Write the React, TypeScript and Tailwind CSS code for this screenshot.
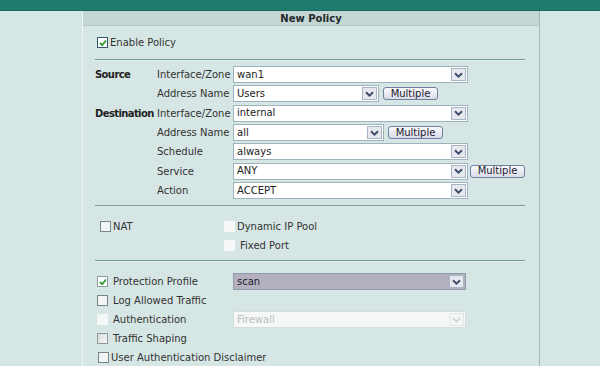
import React from "react";

const font = { fontFamily: '"DejaVu Sans", Verdana, sans-serif' };

function Chevron({ color = "#4a5a7a" }: { color?: string }) {
  return (
    <svg width="9" height="6" viewBox="0 0 9 6">
      <path d="M1 1.2 L4.5 4.6 L8 1.2" fill="none" stroke={color} strokeWidth="1.9" />
    </svg>
  );
}

function Select({
  value,
  width,
  variant = "normal",
}: {
  value: string;
  width: string;
  variant?: "normal" | "selected" | "disabled";
}) {
  const box =
    variant === "selected"
      ? "bg-[#b4b0bf] border-[#8d9aa8] text-[#1e1e2a]"
      : variant === "disabled"
      ? "bg-[#f6f8f7] border-[#d6dedd] text-[#b9bebe]"
      : "bg-white border-[#9fb3bd] text-[#222]";
  const arrow =
    variant === "disabled"
      ? "bg-[#f4f5f5] border-[#e2e6e6]"
      : "bg-[#e6e8ee] border-[#a9b4c4]";
  return (
    <div className={`flex h-[17px] items-center border ${box} ${width}`}>
      <div className="flex-1 pl-[3px] text-[10px] leading-none">{value}</div>
      <div className={`mr-px flex h-[13px] w-[15px] items-center justify-center border ${arrow}`}>
        <Chevron color={variant === "disabled" ? "#d0d4d6" : "#3d4b6b"} />
      </div>
    </div>
  );
}

function Multiple({ ml = "ml-[4px]" }: { ml?: string }) {
  return (
    <div className={`${ml} flex h-[13px] w-[55px] items-center justify-center rounded-[3px] border border-[#6f7f9e] bg-gradient-to-b from-[#fbfbfd] to-[#d9dbe8] text-[10px] leading-none text-[#1c1c30]`}>
      Multiple
    </div>
  );
}

function Check({
  state,
}: {
  state: "checked" | "checkedDark" | "unchecked" | "disabled" | "shade";
}) {
  const cls =
    state === "checkedDark"
      ? "border-[#34556a] bg-white"
      : state === "checked"
      ? "border-[#8e9e9e] bg-white"
      : state === "disabled"
      ? "border-transparent bg-[#f5f8f7]"
      : state === "shade"
      ? "border-[#8e9a9a] bg-gradient-to-br from-[#d8dcdc] to-[#f6f7f7]"
      : "border-[#76878a] bg-[#f3f5f5]";
  return (
    <div className={`flex h-[11px] w-[11px] shrink-0 items-center justify-center border ${cls}`}>
      {(state === "checked" || state === "checkedDark") && (
        <svg width="8" height="8" viewBox="0 0 8 8">
          <path d="M1 4 L3.2 6.2 L7 1.5" fill="none" stroke="#2f9a2f" strokeWidth="1.8" />
        </svg>
      )}
    </div>
  );
}

function Hr() {
  return <div className="ml-[12px] h-[2px] w-[430px] border-b border-[#e4eeec] bg-[#6d9e96]" />;
}

export default function App() {
  return (
    <div
      className="h-[366px] w-[600px] overflow-hidden bg-[#d6e6e4] text-[10px] text-[#333]"
      style={font}
    >
      <div className="h-[11px] border-b border-[#176a60] bg-[#1f7b70]" />
      <div className="ml-[82px] h-[355px] w-[458px] border-l border-r border-l-[#eef6f5] border-r-[#a3b7b4]">
        <div className="flex h-[15px] items-center justify-center border-b border-[#b5c8c5] bg-[#c4d6d3] text-[10px] font-bold text-[#1e2a2a]">
          New Policy
        </div>
        {/* Enable policy */}
        <div className="mt-[9px] flex items-center pl-[14px]">
          <Check state="checkedDark" />
          <span className="ml-[2px]">Enable Policy</span>
        </div>
        <div className="mt-[9px]">
          <Hr />
        </div>
        {/* Address grid */}
        <div className="ml-[12px] mt-[4px] grid grid-cols-[62px_76px_1fr] auto-rows-[19.33px] items-center">
          <div className="font-bold tracking-[-0.6px] text-[#222]">Source</div>
          <div>Interface/Zone</div>
          <div><Select value="wan1" width="w-[235px]" /></div>

          <div />
          <div>Address Name</div>
          <div className="flex items-center"><Select value="Users" width="w-[146px]" /><Multiple /></div>

          <div className="font-bold tracking-[-0.6px] text-[#222]">Destination</div>
          <div>Interface/Zone</div>
          <div><Select value="internal" width="w-[235px]" /></div>

          <div />
          <div>Address Name</div>
          <div className="flex items-center"><Select value="all" width="w-[151px]" /><Multiple /></div>

          <div />
          <div>Schedule</div>
          <div><Select value="always" width="w-[235px]" /></div>

          <div />
          <div>Service</div>
          <div className="flex items-center"><Select value="ANY" width="w-[235px]" /><Multiple ml="ml-[2px]" /></div>

          <div />
          <div>Action</div>
          <div><Select value="ACCEPT" width="w-[235px]" /></div>
        </div>
        <div className="mt-[5px]">
          <Hr />
        </div>
        {/* NAT */}
        <div className="mt-[13px] flex h-[12px] items-center">
          <div className="ml-[17px] flex w-[124px] items-center">
            <Check state="unchecked" />
            <span className="ml-[2px]">NAT</span>
          </div>
          <Check state="disabled" />
          <span className="ml-[2px]">Dynamic IP Pool</span>
        </div>
        <div className="mt-[7px] flex h-[12px] items-center pl-[141px]">
          <Check state="disabled" />
          <span className="ml-[5px]">Fixed Port</span>
        </div>
        <div className="mt-[9px]">
          <Hr />
        </div>
        {/* Bottom options */}
        <div className="ml-[14px] mt-[11px] flex h-[17px] items-center">
          <div className="flex w-[136px] items-center">
            <Check state="checked" />
            <span className="ml-[5px]">Protection Profile</span>
          </div>
          <Select value="scan" width="w-[233px]" variant="selected" />
        </div>
        <div className="ml-[14px] mt-[2px] flex h-[17px] items-center">
          <Check state="unchecked" />
          <span className="ml-[5px]">Log Allowed Traffic</span>
        </div>
        <div className="ml-[14px] mt-[2px] flex h-[17px] items-center">
          <div className="flex w-[136px] items-center">
            <Check state="disabled" />
            <span className="ml-[5px]">Authentication</span>
          </div>
          <Select value="Firewall" width="w-[233px]" variant="disabled" />
        </div>
        <div className="ml-[14px] mt-[2px] flex h-[17px] items-center">
          <Check state="shade" />
          <span className="ml-[5px]">Traffic Shaping</span>
        </div>
        <div className="ml-[15px] mt-[2px] flex h-[17px] items-center">
          <Check state="unchecked" />
          <span className="ml-[2px]">User Authentication Disclaimer</span>
        </div>
      </div>
    </div>
  );
}
